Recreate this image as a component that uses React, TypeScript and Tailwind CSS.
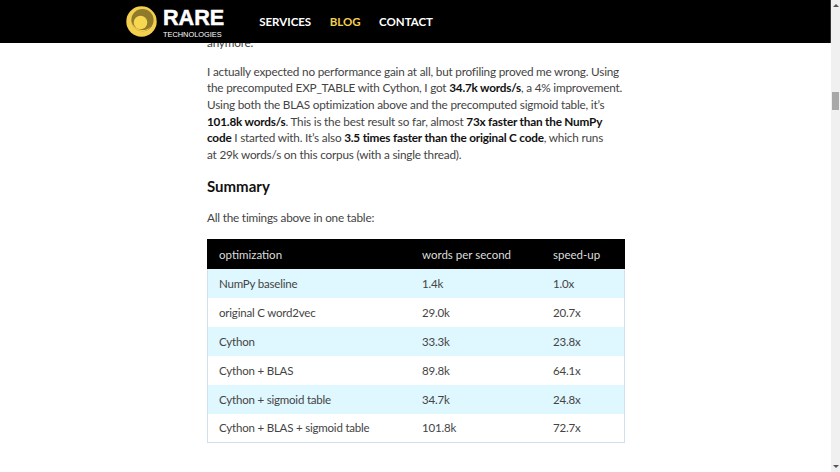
const rows = [
  ["NumPy baseline", "1.4k", "1.0x"],
  ["original C word2vec", "29.0k", "20.7x"],
  ["Cython", "33.3k", "23.8x"],
  ["Cython + BLAS", "89.8k", "64.1x"],
  ["Cython + sigmoid table", "34.7k", "24.8x"],
  ["Cython + BLAS + sigmoid table", "101.8k", "72.7x"],
];

const Logo = () => (
  <div className="flex items-center gap-[6px]">
    <svg width="31" height="31" viewBox="0 0 32 32">
      <circle cx="16" cy="16" r="15.7" fill="#f2cf4e" />
      <circle cx="17" cy="14.5" r="11.5" fill="#8f7a2c" />
      <path d="M6 17a11 11 0 0 0 20 4a12 12 0 0 1-20-4z" fill="#f2cf4e" />
      <circle cx="15" cy="17" r="7" fill="#f7d752" />
    </svg>
    <div className="flex flex-col font-['Liberation_Sans',sans-serif] text-white">
      <span className="text-[21.6px] leading-[25px] font-bold [-webkit-text-stroke:0.5px_white]">RARE</span>
      <span className="text-[7.4px] leading-[9px]">TECHNOLOGIES</span>
    </div>
  </div>
);

const Scrollbar = () => (
  <aside className="flex h-full w-[9px] flex-col items-center justify-between bg-[#f0f0f0] py-[4px]">
    <span className="h-0 w-0 border-x-[3px] border-b-[3px] border-x-transparent border-b-[#555]" />
    <span className="h-0 w-0 border-x-[3px] border-t-[3px] border-x-transparent border-t-[#555]" />
  </aside>
);

export default function App() {
  return (
    <div className="flex h-[472px] w-[840px] overflow-hidden bg-white font-['Lato',sans-serif] text-[11.75px] tracking-[-0.2px] text-[#444]">
      <div className="relative h-full flex-1 overflow-hidden">
        <header className="absolute inset-x-0 top-0 flex h-[43px] items-center bg-black pl-[126px] tracking-normal">
          <Logo />
          <nav className="ml-[35px] flex gap-[18.5px] text-[11.5px] font-bold text-white">
            <a>SERVICES</a>
            <a className="text-[#f2cf4e]">BLOG</a>
            <a>CONTACT</a>
          </nav>
        </header>

        <main className="ml-[207px] w-[418px] pt-[35px]">
          <p className="leading-[16.67px]">anymore.</p>
          <p className="mt-[12px] leading-[16.67px] whitespace-nowrap">
            I actually expected no performance gain at all, but profiling proved me wrong. Using<br />
            the precomputed EXP_TABLE with Cython, I got <b className="text-[#111]">34.7k words/s</b>, a 4% improvement.<br />
            Using both the BLAS optimization above and the precomputed sigmoid table, it’s<br />
            <b className="text-[#111]">101.8k words/s</b>. This is the best result so far, almost <b className="text-[#111]">73x faster than the NumPy</b><br />
            <b className="text-[#111]">code</b> I started with. It’s also <b className="text-[#111]">3.5 times faster than the original C code</b>, which runs<br />
            at 29k words/s on this corpus (with a single thread).
          </p>
          <h2 className="mt-[12px] text-[15px] leading-[20px] font-bold tracking-normal text-[#111]">Summary</h2>
          <p className="mt-[14px] leading-[16.67px]">All the timings above in one table:</p>

          <table className="mt-[13px] w-[418px] table-fixed border-separate border-spacing-0 text-[11.5px] [&_td]:border-[#cfe0ef] [&_td]:pb-px [&_td:first-child]:border-l [&_td:last-child]:border-r [&_tr:last-child_td]:border-b">
            <thead>
              <tr className="h-[30px] bg-black text-left tracking-normal text-[#dddddd]">
                <th className="w-[215px] pl-[12px] font-normal">optimization</th>
                <th className="w-[131px] font-normal">words per second</th>
                <th className="font-normal">speed-up</th>
              </tr>
            </thead>
            <tbody className="tracking-[-0.2px]">
              {rows.map((row, i) => (
                <tr key={row[0]} className={i % 2 === 0 ? "h-[29px] bg-[#dff7fe]" : "h-[29px] bg-white"}>
                  <td className="pl-[11px]">{row[0]}</td>
                  <td>{row[1]}</td>
                  <td>{row[2]}</td>
                </tr>
              ))}
            </tbody>
          </table>
        </main>

        <div className="absolute top-0 right-0 h-[43px] w-px bg-[#333]" />
      </div>
      <div className="relative h-full">
        <Scrollbar />
        <div className="absolute top-[92px] left-px h-[18px] w-[7px] bg-[#a8a8a8]" />
      </div>
    </div>
  );
}
